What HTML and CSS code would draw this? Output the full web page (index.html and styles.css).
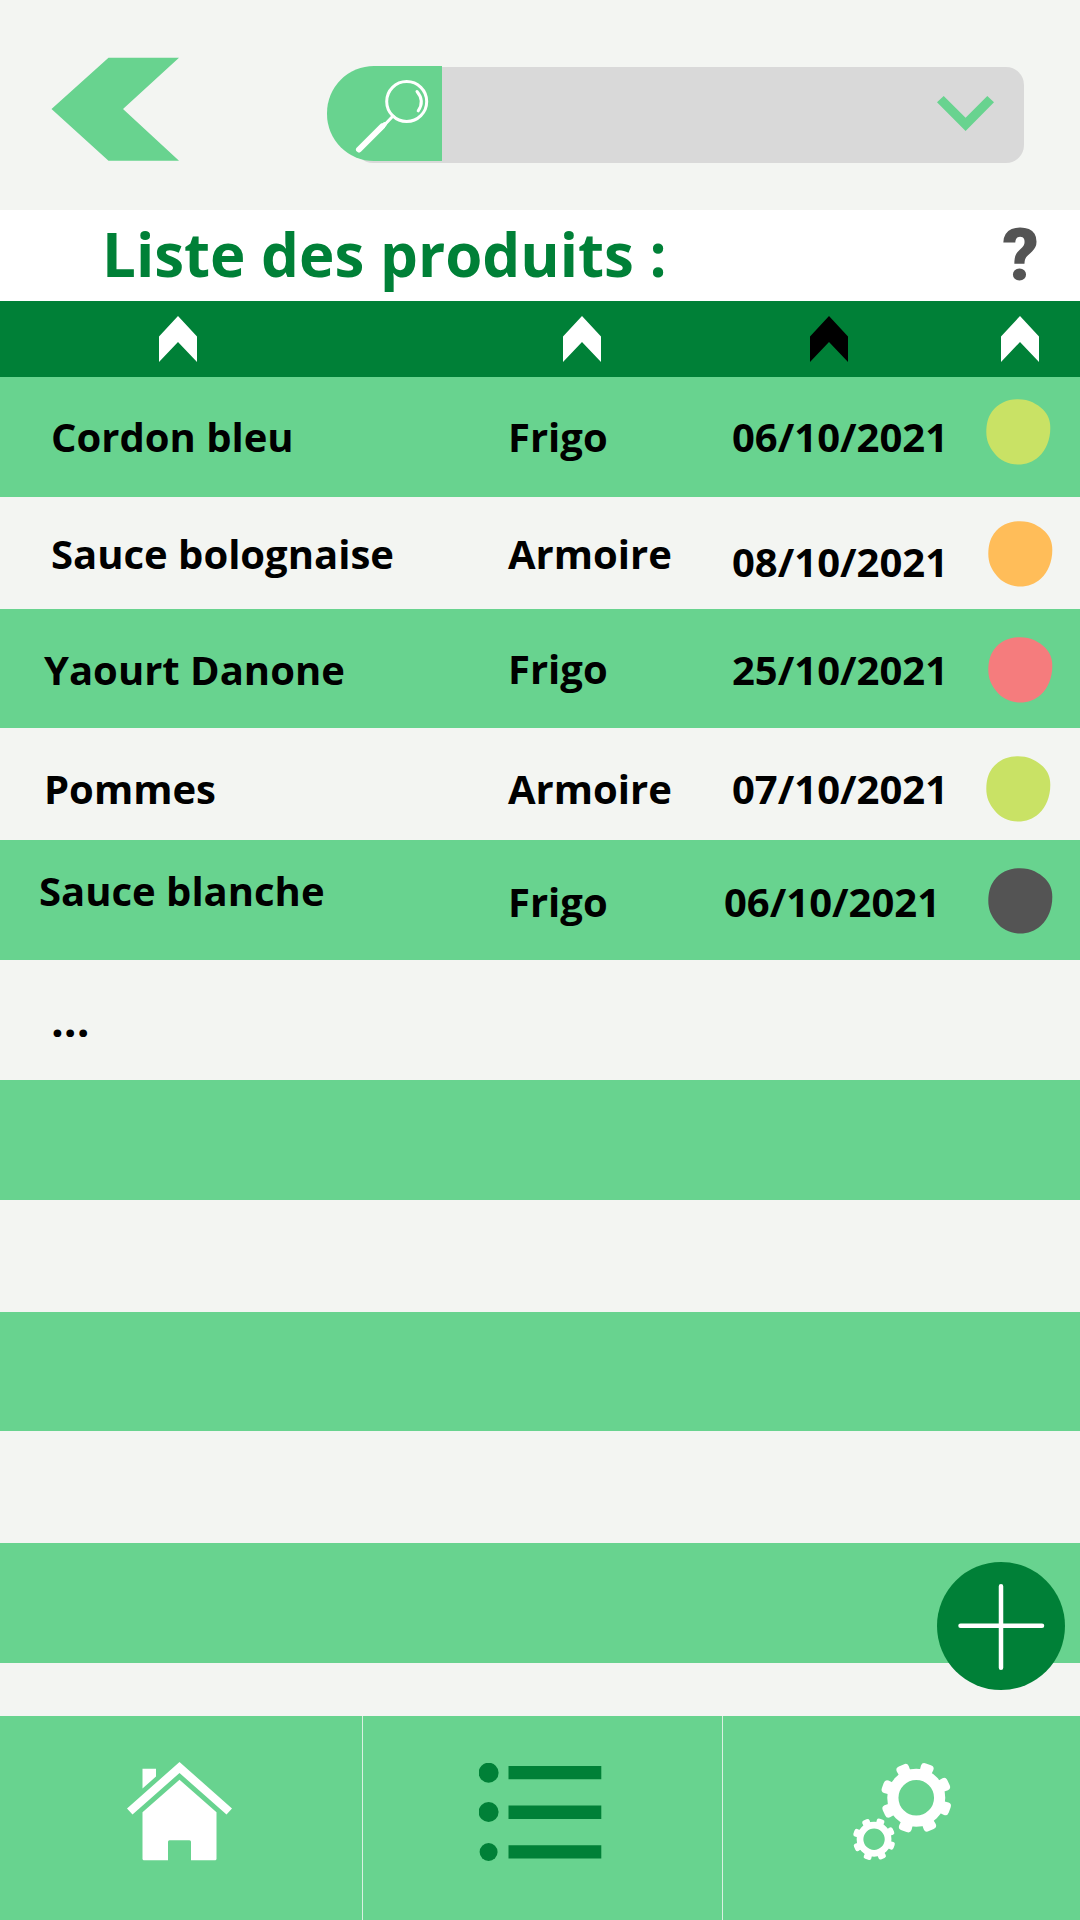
FILE: index.html
```html
<!DOCTYPE html>
<html lang="fr">
<head>
<meta charset="utf-8">
<title>Liste des produits</title>
<link rel="stylesheet" href="styles.css">
</head>
<body>
<svg class="defs" aria-hidden="true">
  <symbol id="sort" viewBox="0 0 38 46"><path d="M19 0L38 20.5V46L19 26L0 46V20.5Z"/></symbol>
  <symbol id="blob" viewBox="0 0 65 66"><path d="M31 0.300C43 0 51 5 57 10.500C62 15.500 64.300 21 64.300 29C64.300 41 60 51 53 57.500C47 63 40 65.500 32 65.500C22 65.500 14 61 9 55C3 48 0.300 41 0.300 33C0.500 25 1.500 19 6 12.500C12 4.500 21 0.500 31 0.300Z"/></symbol>
  <symbol id="gear" viewBox="-110 -110 220 220">
    <path id="tooth" d="M-18 -76L-20 -97Q-20 -108 -8 -108H8Q20 -108 20 -97L18 -76Z" transform="rotate(20)"/>
    <use href="#tooth" transform="rotate(45)"/><use href="#tooth" transform="rotate(90)"/>
    <use href="#tooth" transform="rotate(135)"/><use href="#tooth" transform="rotate(180)"/>
    <use href="#tooth" transform="rotate(225)"/><use href="#tooth" transform="rotate(270)"/>
    <use href="#tooth" transform="rotate(315)"/>
    <circle r="71" fill="none" stroke="currentColor" stroke-width="34"/>
  </symbol>
</svg>
<div class="app">
  <header class="topbar">
    <svg class="back" viewBox="0 0 128 104"><path d="M0.500 52L57.500 0.700H128L72 52L128 103.700H57.500Z"/></svg>
    <div class="search">
      <div class="search-button">
        <svg viewBox="0 0 115 95" width="115" height="95" fill="none" stroke="#fff" stroke-linecap="round">
          <circle cx="79.700" cy="35.500" r="20" stroke-width="3"/>
          <path d="M90 25.500Q98 35 91.200 44.800" stroke-width="3"/>
          <path d="M66 50L56 60.500" stroke-width="3"/>
          <path d="M55 60.500L32 83.500" stroke-width="6"/>
          <path d="M57.500 58.500L52 64" stroke-width="4.500"/>
        </svg>
      </div>
      <div class="search-field">
        <svg viewBox="0 0 57 35" width="57" height="35"><path d="M0 6.300L6.700 0L28.600 21.700L50.300 0L57 6.300L28.600 35Z"/></svg>
      </div>
    </div>
  </header>
  <div class="heading"><h1>Liste des produits :</h1><span class="help">?</span></div>
  <div class="columns">
    <svg class="sort"><use href="#sort"/></svg>
    <svg class="sort"><use href="#sort"/></svg>
    <svg class="sort active"><use href="#sort"/></svg>
    <svg class="sort"><use href="#sort"/></svg>
  </div>
  <main class="list">
    <div class="row r1"><span class="name">Cordon bleu</span><span>Frigo</span><span class="date">06/10/2021</span><svg class="dot lime"><use href="#blob"/></svg></div>
    <div class="row r2"><span class="name">Sauce bolognaise</span><span>Armoire</span><span class="date">08/10/2021</span><svg class="dot orange"><use href="#blob"/></svg></div>
    <div class="row r3"><span class="name">Yaourt Danone</span><span>Frigo</span><span class="date">25/10/2021</span><svg class="dot red"><use href="#blob"/></svg></div>
    <div class="row r4"><span class="name">Pommes</span><span>Armoire</span><span class="date">07/10/2021</span><svg class="dot lime"><use href="#blob"/></svg></div>
    <div class="row r5"><span class="name">Sauce blanche</span><span>Frigo</span><span class="date">06/10/2021</span><svg class="dot dark"><use href="#blob"/></svg></div>
    <div class="row r6"><span class="name">...</span></div>
    <div class="row r7"></div>
    <div class="row r8"></div>
    <div class="row r9"></div>
    <div class="row r10"></div>
    <div class="row r11"></div>
    <div class="row r12"></div>
  </main>
  <nav class="tabs">
    <div class="tab home">
      <svg viewBox="0 0 105 99" width="105" height="99" fill="#fff"><path d="M0 46.500L52.500 0L105 46.500L99.500 52.500L52.500 11L5.500 52.500Z"/><path d="M15.500 6.700H29V14.500L15.500 26.500Z"/><path d="M52.500 18L89.500 50.500V97.500L88.500 98.500H64V80Q64 78.500 62.500 78.500H42.500Q41 78.500 41 80V98.500H16.500L15.500 97.500V50.500Z" transform="translate(0 -0.200)"/></svg>
    </div>
    <div class="tab menu">
      <svg viewBox="0 0 123 99" width="123" height="99" fill="#008037"><circle cx="9.600" cy="9.700" r="10"/><circle cx="9.600" cy="49" r="10"/><circle cx="9.600" cy="89" r="9"/><path d="M29.500 3H122.300V16.300H29.500ZM29.500 42.600H122.300V56H29.500ZM29.500 82.300H122.300V95.500H29.500Z"/></svg>
    </div>
    <div class="tab settings">
      <svg viewBox="0 0 100 100" width="100" height="100" fill="#fff" color="#fff"><use href="#gear" x="28" y="-0.500" width="72.500" height="72.500"/><use href="#gear" x="0.300" y="55.500" width="43.500" height="43.500"/></svg>
    </div>
  </nav>
  <button class="add" aria-label="Ajouter"><svg viewBox="0 0 128 128" width="128" height="128"><path d="M64 24.500V106M23.500 64H105" transform="translate(0 -0.300)" stroke="#fff" stroke-width="4.500" stroke-linecap="round"/></svg></button>
</div>
</body>
</html>
```
FILE: styles.css
```css
* { box-sizing: border-box; }
body { margin: 0; font-family: "Open Sans", sans-serif; }
svg { display: block; flex: none; }
.defs { position: absolute; width: 0; height: 0; }

.app {
  position: relative;
  display: flex;
  flex-direction: column;
  width: 1080px;
  height: 1920px;
  overflow: hidden;
  background: #f3f5f2;
}

.topbar { display: flex; flex: none; height: 210px; padding: 57px 56.5px 0 51px; }
.back { width: 128px; height: 104px; fill: #68d38f; }
.search { display: flex; flex: 1; height: 98px; margin: 9px 0 0 148px; }
.search-button {
  z-index: 1;
  width: 115px;
  height: 94.5px;
  border-radius: 47px 0 0 47px;
  background: #68d38f;
}
.search-field {
  display: flex;
  flex: 1;
  justify-content: flex-end;
  height: 96px;
  margin: 1.3px 0 0 -87px;
  padding: 28.7px 29.5px 0 0;
  border-radius: 18px;
  background: #d9d9d9;
  fill: #68d38f;
}

.heading {
  display: flex;
  flex: none;
  justify-content: space-between;
  height: 91px;
  padding: 0 41px 0 102px;
  background: #fff;
}
h1 { margin: 3px 0 0; color: #008037; font-size: 60px; line-height: 82px; font-weight: 700; }
.help { color: #545454; font: 900 72px/84px Roboto, sans-serif; margin-top: 4px; }

.columns { display: grid; grid-template-columns: 404px 247px 191px 38px; flex: none; height: 76px; padding: 15px 0 0 159px; background: #008037; }
.sort { width: 38px; height: 46px; fill: #fff; }
.sort.active { fill: #000; }

.list { flex: none; color: #000; font-size: 40px; line-height: 54px; font-weight: 700; }
.row {
  display: grid;
  grid-template-columns: 457px 224px 253.5px 66px;
  align-items: start;
  height: 120px;
  padding: 33px 0 0 51px;
}
.row:nth-child(odd) { background: #68d38f; }
.row span { white-space: nowrap; }
.dot { width: 65px; height: 66px; }
.lime { fill: #c9e265; }
.orange { fill: #ffbd59; }
.red { fill: #f57c7d; }
.dark { fill: #545454; }

.r1 .dot { margin-top: -11px; }
.r2 { height: 112px; padding-top: 30px; }
.r2 .date { margin-top: 8px; }
.r2 .dot { margin: -6px 0 0 2px; }
.r3 { height: 119px; }
.r3 .name { margin: 1px 0 0 -7px; }
.r3 .date { margin-top: 1px; }
.r3 .dot { margin: -5.5px 0 0 2px; }
.r4 { height: 112px; padding-top: 34px; }
.r4 .name { margin-left: -7px; }
.r4 .dot { margin-top: -6px; }
.r5 { padding-top: 35px; }
.r5 .name { margin: -11px 0 0 -12px; }
.r5 .date { margin-left: -8px; }
.r5 .dot { margin: -7.5px 0 0 2px; }
.r6 { padding-top: 33px; font-size: 45px; }
.r8 { height: 112px; }
.r9 { height: 119px; }
.r10 { height: 112px; }
.r12 { height: 53px; }

.tabs { display: grid; grid-template-columns: 362px 360px 1fr; flex: 1; background: #68d38f; }
.tab + .tab { border-left: 1px solid #d9f0e1; }
.home { padding: 46px 0 0 127px; }
.menu { padding: 47px 0 0 116px; }
.settings { padding: 46px 0 0 129px; }

.add {
  position: absolute;
  right: 15px;
  bottom: 230px;
  width: 128px;
  height: 128px;
  padding: 0;
  border: 0;
  border-radius: 50%;
  background: #008037;
}
```
